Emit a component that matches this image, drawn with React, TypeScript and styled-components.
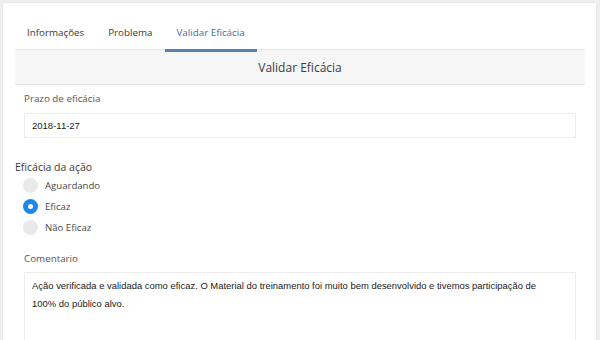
import React, { useState } from "react";
import styled, { createGlobalStyle } from "styled-components";

const GlobalStyle = createGlobalStyle`
  html, body {
    margin: 0;
    padding: 0;
    background: #efefef;
    font-family: "Open Sans", "Noto Sans", sans-serif;
  }
`;

const Page = styled.div`
  width: 600px;
  height: 340px;
  overflow: hidden;
  padding: 3px 4px 0 3px;
  box-sizing: border-box;
`;

const Card = styled.div`
  background: #fff;
  height: 400px;
  padding: 0 11px 0 12px;
  box-shadow: 0 0 2px rgba(0, 0, 0, 0.08);
`;

const Tabs = styled.ul`
  list-style: none;
  margin: 0;
  padding: 0;
  display: flex;
  height: 46px;
`;

const Tab = styled.li<{ $active?: boolean }>`
  padding: 23px 12px 0;
  font-size: 9.8px;
  line-height: 14px;
  color: ${(p) => (p.$active ? "#3b70a8" : "#3a3a3a")};
  border-bottom: 3px solid ${(p) => (p.$active ? "#5582ad" : "transparent")};
  box-sizing: border-box;
  cursor: pointer;
  height: 49px;
  position: relative;
  z-index: 1;
`;

const SectionHead = styled.div`
  background: #f6f6f6;
  border-top: 1px solid #e6e6e6;
  border-bottom: 1px solid #e2e2e2;
  height: 34px;
  display: flex;
  align-items: center;
  justify-content: center;
  font-size: 12px;
  color: #3a3a3a;
`;

const Body = styled.div`
  padding: 7px 9px 0;
`;

const Label = styled.div<{ $gap?: number }>`
  font-size: 9.8px;
  line-height: 14px;
  color: #555;
  margin-bottom: ${(p) => p.$gap ?? 7}px;
`;

const Input = styled.div`
  border: 1px solid #ececec;
  height: 23px;
  padding: 0 7px;
  display: flex;
  align-items: center;
  font-family: "Liberation Sans", Arial, sans-serif;
  font-size: 9.5px;
  color: #1a1a1a;
`;

const Group = styled.div`
  margin: 21px 0 0 -9px;
`;

const GroupTitle = styled.div`
  font-size: 10.5px;
  line-height: 16px;
  color: #3a3a3a;
`;

const RadioRow = styled.label`
  display: flex;
  align-items: center;
  height: 21px;
  padding-left: 8px;
  font-size: 9.6px;
  color: #4a4a4a;
  gap: 7px;
  cursor: pointer;
`;

const Dot = styled.span<{ $on?: boolean }>`
  width: 15px;
  height: 15px;
  border-radius: 50%;
  background: ${(p) => (p.$on ? "#1c88ec" : "#e9e9e9")};
  display: flex;
  align-items: center;
  justify-content: center;
  &::after {
    content: "";
    width: 5px;
    height: 5px;
    border-radius: 50%;
    background: #fff;
    display: ${(p) => (p.$on ? "block" : "none")};
  }
`;

const CommentBlock = styled.div`
  margin-top: 14px;
`;

const TextArea = styled.div`
  border: 1px solid #ececec;
  height: 80px;
  padding: 4px 30px 3px 7px;
  font-family: "Liberation Sans", Arial, sans-serif;
  font-size: 9.45px;
  line-height: 17.5px;
  color: #1a1a1a;
`;

const options = ["Aguardando", "Eficaz", "Não Eficaz"];

export default function App() {
  const [choice, setChoice] = useState("Eficaz");
  return (
    <Page>
      <GlobalStyle />
      <Card>
        <Tabs>
          <Tab>Informações</Tab>
          <Tab>Problema</Tab>
          <Tab $active>Validar Eficácia</Tab>
        </Tabs>
        <SectionHead>Validar Eficácia</SectionHead>
        <Body>
          <Label>Prazo de eficácia</Label>
          <Input>2018-11-27</Input>
          <Group>
            <GroupTitle>Eficácia da ação</GroupTitle>
            {options.map((o) => (
              <RadioRow key={o} onClick={() => setChoice(o)}>
                <Dot $on={choice === o} />
                {o}
              </RadioRow>
            ))}
          </Group>
          <CommentBlock>
            <Label $gap={6}>Comentario</Label>
            <TextArea>
              Ação verificada e validada como eficaz. O Material do treinamento foi muito bem desenvolvido e tivemos participação de 100% do público alvo.
            </TextArea>
          </CommentBlock>
        </Body>
      </Card>
    </Page>
  );
}
